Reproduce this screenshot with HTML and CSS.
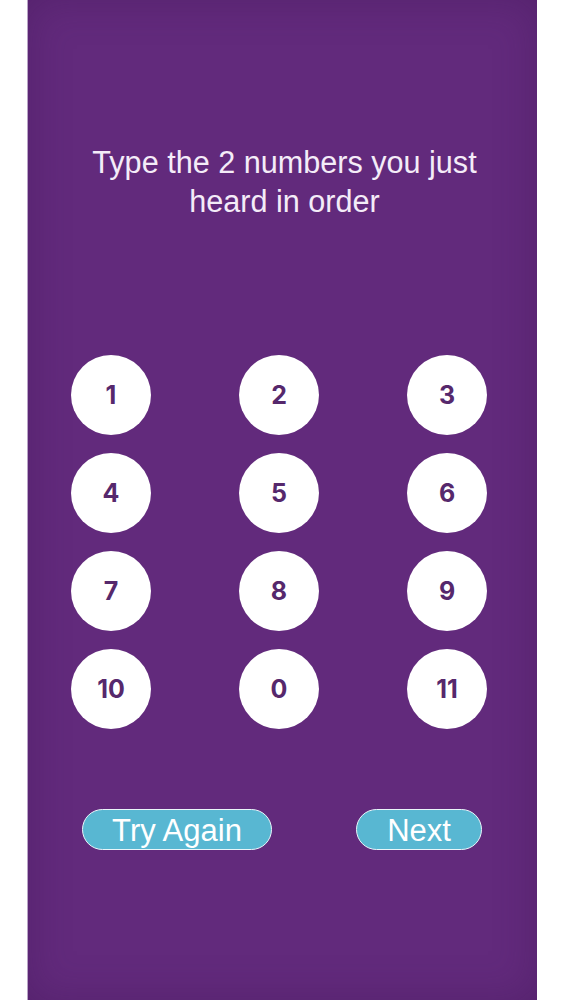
FILE: index.html
```html
<!DOCTYPE html>
<html>
<head>
<meta charset="utf-8">
<link rel="stylesheet" href="styles.css">
</head>
<body>
<div class="panel">
  <h1 class="prompt">Type the 2 numbers you just<br>heard in order</h1>
  <div class="keypad">
    <div class="key">1</div>
    <div class="key">2</div>
    <div class="key">3</div>
    <div class="key">4</div>
    <div class="key">5</div>
    <div class="key">6</div>
    <div class="key">7</div>
    <div class="key">8</div>
    <div class="key">9</div>
    <div class="key">10</div>
    <div class="key">0</div>
    <div class="key">11</div>
  </div>
  <div class="actions">
    <div class="btn btn-try">Try Again</div>
    <div class="btn btn-next">Next</div>
  </div>
</div>
</body>
</html>
```
FILE: styles.css
```css
html, body {
  margin: 0;
  padding: 0;
  background: #ffffff;
}
.panel {
  margin-left: 27px;
  width: 510px;
  height: 1000px;
  background: #622a7c;
  box-shadow: inset 0 0 40px rgba(60, 20, 80, 0.35);
  border-left: 1px solid #b9a4c6;
  box-sizing: border-box;
  overflow: hidden;
}
.prompt {
  margin: 0;
  padding-top: 143px;
  padding-left: 4px;
  text-align: center;
  color: #f4ecf8;
  font-family: "Liberation Sans", Arial, sans-serif;
  font-weight: 400;
  font-size: 30.6px;
  line-height: 39px;
}
.keypad {
  margin-top: 134px;
  padding-left: 43px;
  display: grid;
  grid-template-columns: repeat(3, 80px);
  column-gap: 88px;
  row-gap: 18px;
}
.key {
  width: 80px;
  height: 80px;
  border-radius: 50%;
  background: #ffffff;
  color: #56286c;
  display: flex;
  align-items: center;
  justify-content: center;
  font-family: "Inter", "Open Sans", sans-serif;
  font-weight: 700;
  font-size: 25px;
}
.actions {
  margin-top: 80px;
  padding-left: 54px;
  padding-right: 55px;
  display: flex;
  justify-content: space-between;
}
.btn {
  height: 41px;
  box-sizing: border-box;
  border: 1.5px solid #eaf6fa;
  border-radius: 21px;
  background: #58b7d2;
  color: #ffffff;
  font-family: "Liberation Sans", Arial, sans-serif;
  font-size: 31px;
  line-height: 41px;
  text-align: center;
}
.btn-try {
  width: 190px;
}
.btn-next {
  width: 126px;
}
```
